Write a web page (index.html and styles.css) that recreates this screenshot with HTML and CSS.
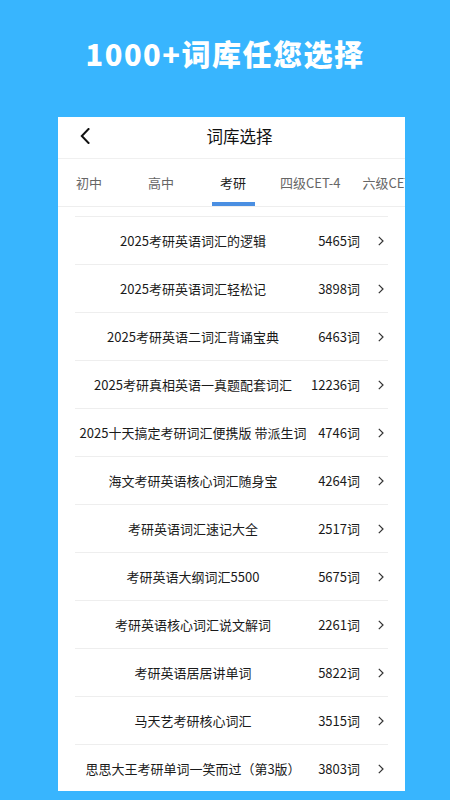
FILE: index.html
```html
<!DOCTYPE html>
<html lang="zh-CN">
<head>
<meta charset="utf-8">
<title>词库选择</title>
<link rel="stylesheet" href="styles.css">
</head>
<body>
<div class="page">
  <h1 class="headline">1000+词库任您选择</h1>
  <div class="card">
    <div class="nav">
      <svg class="back" width="10" height="16" viewBox="0 0 10 16"><path d="M8.5 1 L1.8 8 L8.5 15" fill="none" stroke="#111" stroke-width="2" stroke-linecap="square"/></svg>
      <div class="nav-title">词库选择</div>
    </div>
    <div class="tabs">
      <div class="tabs-inner">
        <div class="tab">初中</div>
        <div class="tab">高中</div>
        <div class="tab active">考研</div>
        <div class="tab">四级CET-4</div>
        <div class="tab">六级CET-6</div>
      </div>
    </div>
    <div class="list">
      <div class="row"><span class="name">2025考研英语词汇的逻辑</span><span class="count">5465词</span><svg class="arrow" width="6" height="10" viewBox="0 0 6 10"><path d="M0.8 0.8 L5 5 L0.8 9.2" fill="none" stroke="#333" stroke-width="1.2"/></svg></div>
      <div class="row"><span class="name">2025考研英语词汇轻松记</span><span class="count">3898词</span><svg class="arrow" width="6" height="10" viewBox="0 0 6 10"><path d="M0.8 0.8 L5 5 L0.8 9.2" fill="none" stroke="#333" stroke-width="1.2"/></svg></div>
      <div class="row"><span class="name">2025考研英语二词汇背诵宝典</span><span class="count">6463词</span><svg class="arrow" width="6" height="10" viewBox="0 0 6 10"><path d="M0.8 0.8 L5 5 L0.8 9.2" fill="none" stroke="#333" stroke-width="1.2"/></svg></div>
      <div class="row"><span class="name">2025考研真相英语一真题配套词汇</span><span class="count">12236词</span><svg class="arrow" width="6" height="10" viewBox="0 0 6 10"><path d="M0.8 0.8 L5 5 L0.8 9.2" fill="none" stroke="#333" stroke-width="1.2"/></svg></div>
      <div class="row"><span class="name">2025十天搞定考研词汇便携版 带派生词</span><span class="count">4746词</span><svg class="arrow" width="6" height="10" viewBox="0 0 6 10"><path d="M0.8 0.8 L5 5 L0.8 9.2" fill="none" stroke="#333" stroke-width="1.2"/></svg></div>
      <div class="row"><span class="name">海文考研英语核心词汇随身宝</span><span class="count">4264词</span><svg class="arrow" width="6" height="10" viewBox="0 0 6 10"><path d="M0.8 0.8 L5 5 L0.8 9.2" fill="none" stroke="#333" stroke-width="1.2"/></svg></div>
      <div class="row"><span class="name">考研英语词汇速记大全</span><span class="count">2517词</span><svg class="arrow" width="6" height="10" viewBox="0 0 6 10"><path d="M0.8 0.8 L5 5 L0.8 9.2" fill="none" stroke="#333" stroke-width="1.2"/></svg></div>
      <div class="row"><span class="name">考研英语大纲词汇5500</span><span class="count">5675词</span><svg class="arrow" width="6" height="10" viewBox="0 0 6 10"><path d="M0.8 0.8 L5 5 L0.8 9.2" fill="none" stroke="#333" stroke-width="1.2"/></svg></div>
      <div class="row"><span class="name">考研英语核心词汇说文解词</span><span class="count">2261词</span><svg class="arrow" width="6" height="10" viewBox="0 0 6 10"><path d="M0.8 0.8 L5 5 L0.8 9.2" fill="none" stroke="#333" stroke-width="1.2"/></svg></div>
      <div class="row"><span class="name">考研英语居居讲单词</span><span class="count">5822词</span><svg class="arrow" width="6" height="10" viewBox="0 0 6 10"><path d="M0.8 0.8 L5 5 L0.8 9.2" fill="none" stroke="#333" stroke-width="1.2"/></svg></div>
      <div class="row"><span class="name">马天艺考研核心词汇</span><span class="count">3515词</span><svg class="arrow" width="6" height="10" viewBox="0 0 6 10"><path d="M0.8 0.8 L5 5 L0.8 9.2" fill="none" stroke="#333" stroke-width="1.2"/></svg></div>
      <div class="row"><span class="name">思思大王考研单词一笑而过（第3版）</span><span class="count">3803词</span><svg class="arrow" width="6" height="10" viewBox="0 0 6 10"><path d="M0.8 0.8 L5 5 L0.8 9.2" fill="none" stroke="#333" stroke-width="1.2"/></svg></div>
    </div>
  </div>
</div>
</body>
</html>
```
FILE: styles.css
```css
html, body {
  margin: 0;
  padding: 0;
}
body {
  background: #38b5fe;
  font-family: "Noto Sans CJK SC", "Noto Sans", sans-serif;
}
.page {
  width: 450px;
  height: 800px;
  overflow: hidden;
  display: flex;
  flex-direction: column;
}
.headline {
  margin: 33px 0 0;
  height: 40px;
  line-height: 40px;
  font-size: 29px;
  font-weight: 900;
  letter-spacing: 1.5px;
  color: #fff;
  text-align: center;
}
.card {
  margin: 44px 0 0 58px;
  width: 347px;
  height: 674px;
  background: #fff;
  overflow: hidden;
  display: flex;
  flex-direction: column;
}
.nav {
  height: 42px;
  box-sizing: border-box;
  padding-bottom: 4px;
  flex: none;
  display: flex;
  align-items: center;
  border-bottom: 1px solid #f0f0f0;
}
.back {
  margin-left: 22px;
  flex: none;
}
.nav-title {
  flex: 1;
  text-align: center;
  padding-right: 16px;
  font-size: 16.5px;
  color: #111;
}
.tabs {
  height: 47px;
  flex: none;
  overflow: hidden;
  border-bottom: 1px solid #eeeeee;
}
.tabs-inner {
  display: flex;
  margin-left: -5px;
  height: 47px;
}
.tab {
  flex: none;
  min-width: 72px;
  box-sizing: border-box;
  padding: 0 11px;
  text-align: center;
  font-size: 13px;
  color: #666;
  line-height: 48px;
  position: relative;
  white-space: nowrap;
}
.tab.active {
  color: #1a1a1a;
}
.tab.active::after {
  content: "";
  position: absolute;
  left: 50%;
  bottom: 0;
  width: 43px;
  height: 4px;
  margin-left: -21px;
  background: #4a8fe2;
}
.list {
  margin: 9px 17px 0;
}
.row {
  height: 47px;
  border-top: 1px solid #eeeeee;
  display: flex;
  align-items: center;
  font-size: 13px;
  color: #1a1a1a;
}
.name {
  width: 236px;
  flex: none;
  text-align: center;
  white-space: nowrap;
}
.count {
  width: 49px;
  flex: none;
  text-align: right;
  white-space: nowrap;
}
.arrow {
  margin-left: 18px;
  flex: none;
}
```
